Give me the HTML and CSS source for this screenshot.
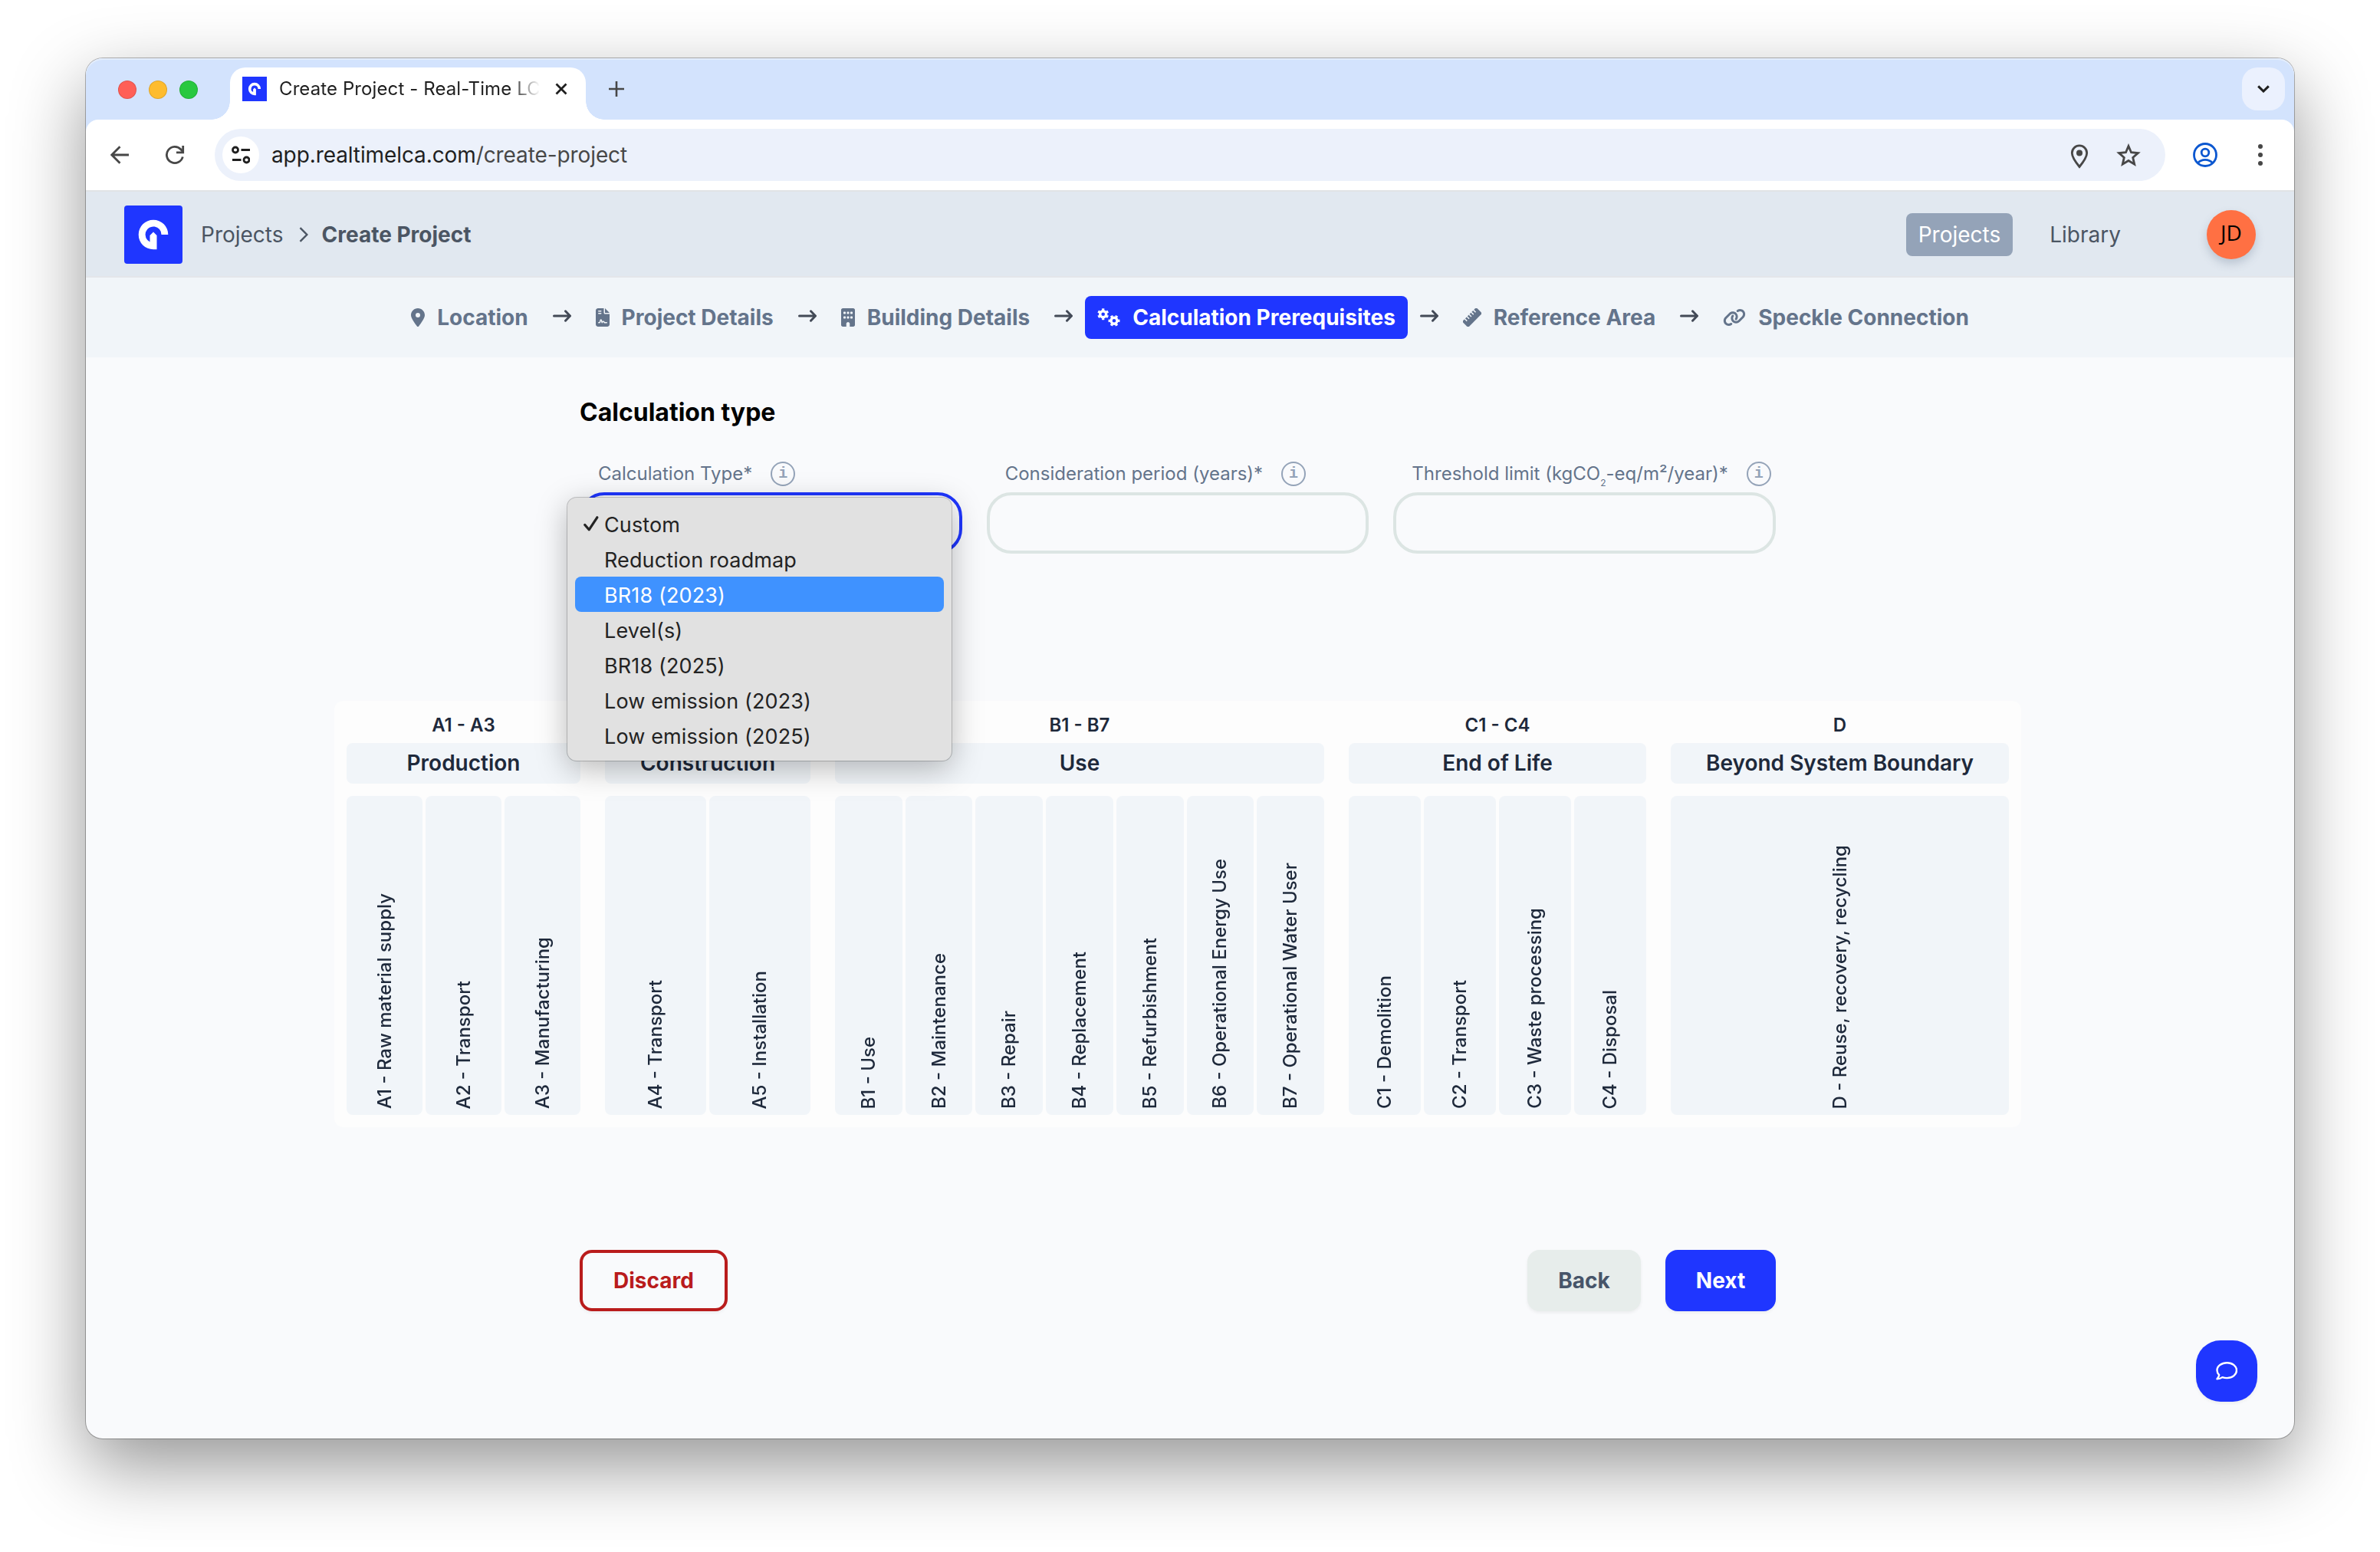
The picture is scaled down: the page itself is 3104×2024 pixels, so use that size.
FILE: index.html
```html
<!DOCTYPE html>
<html lang="en">
<head>
<meta charset="utf-8">
<title>Create Project - Real-Time LCA</title>
<link rel="stylesheet" href="styles.css">
</head>
<body>
<div class="window">
  <div class="tabstrip">
    <div class="lights"><span class="light red"></span><span class="light amber"></span><span class="light green"></span></div>
    <div class="tab">
      <svg class="favicon" viewBox="0 0 76 76"><rect width="76" height="76" fill="#1f36ff"/><path d="M57.3 38A19.3 19.3 0 1 0 38 57.3H42.5V39L38 34.500L33.500 39V47.400A10.500 10.500 0 1 1 48.500 38Z" fill="#fff"/></svg>
      <span class="tab-title">Create Project - Real-Time LC</span>
      <svg class="tab-close" viewBox="0 0 16 16"><path d="M1.500 1.500l13 13M14.500 1.500l-13 13" stroke="#1f1f1f" stroke-width="2.800" fill="none"/></svg>
    </div>
    <svg class="new-tab" viewBox="0 0 20 20"><path d="M10 0v20M0 10h20" stroke="#474747" stroke-width="2.600"/></svg>
    <div class="tab-search"><svg width="16" height="10" viewBox="0 0 16 10"><path d="M1.200 1.400L8 8l6.800-6.600" fill="none" stroke="#1f1f1f" stroke-width="3"/></svg></div>
  </div>
  <div class="toolbar">
    <svg class="nav-back" width="24" height="24" viewBox="0 0 24 24"><path d="M24 12H2.500M12.500 1.200L1.800 12l10.700 10.800" fill="none" stroke="#474747" stroke-width="2.800"/></svg>
    <svg class="nav-reload" width="26" height="26" viewBox="0 0 26 26"><path d="M23.300 15.500A10.600 10.600 0 1 1 20.800 5.800L23.500 8.700" fill="none" stroke="#474747" stroke-width="2.800"/><path d="M23.700 1v8.900H15" fill="none" stroke="#474747" stroke-width="2.800"/></svg>
    <div class="omnibox">
      <div class="site-info"><svg width="24" height="24" viewBox="0 0 24 24" fill="none" stroke="#1f1f1f" stroke-width="2.800"><circle cx="5" cy="5.500" r="3.500"/><path d="M12.500 5.500H24M1 18.500h11.500"/><circle cx="19.500" cy="18.500" r="3.500"/></svg></div>
      <span class="url">app.realtimelca.com<span class="url-path">/create-project</span></span>
      <svg class="pin" width="24" height="32" viewBox="0 0 24 32"><path d="M12 29.500C5.500 21.500 2.300 16 2.300 11.500a9.700 9.700 0 0 1 19.400 0C21.700 16 18.500 21.500 12 29.500z" fill="none" stroke="#474747" stroke-width="2.800"/><circle cx="12" cy="11.500" r="4" fill="#474747"/></svg>
      <svg width="32" height="30" viewBox="0 0 32 30"><path d="M16 3.500l3.500 8.200 8.900.8-6.700 5.900 2 8.700-7.700-4.600-7.700 4.600 2-8.700-6.700-5.900 8.900-.8z" fill="none" stroke="#474747" stroke-width="2.800"/></svg>
    </div>
    <svg class="profile" width="32" height="32" viewBox="0 0 32 32" fill="none" stroke="#0b57d0" stroke-width="2.800"><circle cx="16" cy="16" r="14.500"/><circle cx="16" cy="13" r="4.800"/><path d="M6.500 26.500C9 23.700 12.500 22.400 16 22.400s7 1.300 9.500 4.100"/></svg>
    <svg class="kebab" width="6" height="30" viewBox="0 0 6 30" fill="#474747"><circle cx="3" cy="4" r="3"/><circle cx="3" cy="15" r="3"/><circle cx="3" cy="26" r="3"/></svg>
  </div>

  <header class="header">
    <svg class="logo" viewBox="0 0 76 76"><rect width="76" height="76" rx="4" fill="#1f36ff"/><path d="M57.3 38A19.3 19.3 0 1 0 38 57.3H42.5V39L38 34.500L33.500 39V47.400A10.500 10.500 0 1 1 48.500 38Z" fill="#fff"/></svg>
    <span class="crumb">Projects</span>
    <svg class="crumb-sep" width="12" height="20" viewBox="0 0 12 20"><path d="M1.500 1.200L10.300 10l-8.800 8.800" fill="none" stroke="#4b5563" stroke-width="2.400"/></svg>
    <span class="crumb current">Create Project</span>
    <nav class="nav"><span class="nav-item active">Projects</span><span class="nav-item library">Library</span></nav>
    <div class="avatar">JD</div>
  </header>

  <div class="steps">
    <div class="step"><svg width="18" height="24" viewBox="0 0 384 512"><path d="M215.700 499.200C267 435 384 279.400 384 192C384 86 298 0 192 0S0 86 0 192c0 87.400 117 243 168.300 307.200c12.300 15.300 35.100 15.300 47.400 0zM192 128a64 64 0 1 1 0 128 64 64 0 1 1 0-128z"/></svg><span>Location</span></div>
    <svg class="arrow" viewBox="0 0 24 16"><path d="M1.500 8H22M16.500 1.800L22.500 8l-6 6.200"/></svg>
    <div class="step"><svg width="18" height="24" viewBox="0 0 384 512"><path d="M64 0C28.700 0 0 28.700 0 64V448c0 35.300 28.700 64 64 64H320c35.300 0 64-28.700 64-64V160H256c-17.700 0-32-14.300-32-32V0H64zM256 0V128H384L256 0zM80 64h64c8.800 0 16 7.200 16 16s-7.200 16-16 16H80c-8.800 0-16-7.200-16-16s7.200-16 16-16zm0 64h64c8.800 0 16 7.200 16 16s-7.200 16-16 16H80c-8.800 0-16-7.200-16-16s7.200-16 16-16zm54.200 253.800c-6.100 20.300-24.800 34.200-46 34.200H80c-8.800 0-16-7.200-16-16s7.200-16 16-16h8.200c7.100 0 13.300-4.600 15.300-11.400l14.900-49.500c3.400-11.300 13.800-19.100 25.600-19.100s22.200 7.700 25.600 19.100l11.600 38.600c7.400-6.200 16.800-9.700 26.800-9.700c15.900 0 30.400 9 37.500 23.200l4.400 8.800H304c8.800 0 16 7.200 16 16s-7.200 16-16 16H240c-6.100 0-11.600-3.400-14.300-8.800l-8.800-17.700c-1.700-3.400-5.100-5.500-8.800-5.500s-7.200 2.100-8.800 5.500l-8.800 17.700c-2.900 5.900-9.200 9.400-15.700 8.800s-12.100-5.100-13.900-11.300L144 349l-9.800 32.800z"/></svg><span>Project Details</span></div>
    <svg class="arrow" viewBox="0 0 24 16"><path d="M1.500 8H22M16.500 1.800L22.500 8l-6 6.200"/></svg>
    <div class="step"><svg width="18" height="24" viewBox="0 0 384 512"><path d="M48 0C21.500 0 0 21.500 0 48V464c0 26.500 21.500 48 48 48h96V432c0-26.500 21.500-48 48-48s48 21.500 48 48v80h96c26.500 0 48-21.500 48-48V48c0-26.500-21.500-48-48-48H48zM64 240c0-8.800 7.200-16 16-16h32c8.800 0 16 7.200 16 16v32c0 8.800-7.200 16-16 16H80c-8.800 0-16-7.200-16-16V240zm112-16h32c8.800 0 16 7.200 16 16v32c0 8.800-7.200 16-16 16H176c-8.800 0-16-7.200-16-16V240c0-8.800 7.200-16 16-16zm80 16c0-8.800 7.200-16 16-16h32c8.800 0 16 7.200 16 16v32c0 8.800-7.200 16-16 16H272c-8.800 0-16-7.200-16-16V240zM80 96h32c8.800 0 16 7.200 16 16v32c0 8.800-7.200 16-16 16H80c-8.800 0-16-7.200-16-16V112c0-8.800 7.200-16 16-16zm80 16c0-8.800 7.200-16 16-16h32c8.800 0 16 7.200 16 16v32c0 8.800-7.200 16-16 16H176c-8.800 0-16-7.200-16-16V112zM272 96h32c8.800 0 16 7.200 16 16v32c0 8.800-7.200 16-16 16H272c-8.800 0-16-7.200-16-16V112c0-8.800 7.200-16 16-16z"/></svg><span>Building Details</span></div>
    <svg class="arrow" viewBox="0 0 24 16"><path d="M1.500 8H22M16.500 1.800L22.500 8l-6 6.200"/></svg>
    <div class="step active"><svg width="30" height="24" viewBox="0 0 30 24" fill="none" stroke="#fff"><circle cx="7.700" cy="7.700" r="4" stroke-width="3.400"/><circle cx="7.700" cy="7.700" r="6.200" stroke-width="2.600" pathLength="60" stroke-dasharray="5 5" stroke-dashoffset="-2.500"/><circle cx="22" cy="16.300" r="4" stroke-width="3.400"/><circle cx="22" cy="16.300" r="6.200" stroke-width="2.600" pathLength="60" stroke-dasharray="5 5" stroke-dashoffset="2.500"/></svg><span>Calculation Prerequisites</span></div>
    <svg class="arrow" viewBox="0 0 24 16"><path d="M1.500 8H22M16.500 1.800L22.500 8l-6 6.200"/></svg>
    <div class="step"><svg width="24" height="24" viewBox="0 0 24 24"><g transform="rotate(-45 12 12)"><rect x="-1" y="6.500" width="26" height="11" rx="2"/><path d="M4 6v4.500M8 6v4.500M12 6v4.500M16 6v4.500M20 6v4.500" stroke="#f1f5f9" stroke-width="1.500"/></g></svg><span>Reference Area</span></div>
    <svg class="arrow" viewBox="0 0 24 16"><path d="M1.500 8H22M16.500 1.800L22.500 8l-6 6.200"/></svg>
    <div class="step"><svg width="30" height="24" viewBox="0 0 640 512"><path d="M579.800 267.700c56.500-56.500 56.500-148 0-204.500c-50-50-128.800-56.500-186.300-15.400l-1.600 1.100c-14.400 10.300-17.700 30.300-7.400 44.600s30.300 17.700 44.600 7.400l1.600-1.100c32.100-22.900 76-19.300 103.800 8.600c31.500 31.500 31.500 82.500 0 114L422.300 334.800c-31.500 31.500-82.500 31.500-114 0c-27.900-27.900-31.500-71.800-8.600-103.800l1.100-1.600c10.300-14.400 6.900-34.400-7.400-44.600s-34.400-6.900-44.600 7.400l-1.100 1.600C206.500 251.200 213 330 263 380c56.500 56.500 148 56.500 204.500 0L579.800 267.700zM60.200 244.300c-56.500 56.500-56.500 148 0 204.500c50 50 128.800 56.500 186.300 15.400l1.600-1.100c14.400-10.300 17.700-30.300 7.400-44.600s-30.300-17.700-44.600-7.400l-1.600 1.100c-32.100 22.900-76 19.300-103.800-8.600C74 372 74 321 105.500 289.500L217.700 177.200c31.500-31.500 82.500-31.500 114 0c27.900 27.900 31.500 71.800 8.600 103.900l-1.100 1.600c-10.300 14.400-6.900 34.400 7.400 44.600s34.400 6.900 44.600-7.400l1.100-1.600C433.500 260.800 427 182 377 132c-56.500-56.500-148-56.500-204.500 0L60.200 244.300z"/></svg><span>Speckle Connection</span></div>
  </div>

  <main class="main">
    <div class="form">
      <h2 class="title">Calculation type</h2>
      <div class="fields">
        <div class="field">
          <div class="label"><span>Calculation Type*</span><span class="info">i</span></div>
          <div class="input focused"></div>
          <div class="menu">
            <div class="option checked">Custom<svg class="check" width="20" height="20" viewBox="0 0 20 20"><path d="M1.800 11.500l5.400 6.300L17.800 1.800" fill="none" stroke="#232323" stroke-width="3.200" stroke-linecap="round" stroke-linejoin="round"/></svg></div>
            <div class="option">Reduction roadmap</div>
            <div class="option selected">BR18 (2023)</div>
            <div class="option">Level(s)</div>
            <div class="option">BR18 (2025)</div>
            <div class="option">Low emission (2023)</div>
            <div class="option">Low emission (2025)</div>
          </div>
        </div>
        <div class="field">
          <div class="label"><span>Consideration period (years)*</span><span class="info">i</span></div>
          <div class="input"></div>
        </div>
        <div class="field">
          <div class="label"><span>Threshold limit (kgCO<sub>2</sub>-eq/m²/year)*</span><span class="info">i</span></div>
          <div class="input"></div>
        </div>
      </div>
    </div>

    <div class="stages">
      <section class="group g-a"><div class="range">A1 - A3</div><div class="phase">Production</div>
        <div class="cells"><div class="cell"><span>A1 - Raw material supply</span></div><div class="cell"><span>A2 - Transport</span></div><div class="cell"><span>A3 - Manufacturing</span></div></div></section>
      <section class="group g-con"><div class="range"></div><div class="phase">Construction</div>
        <div class="cells"><div class="cell"><span>A4 - Transport</span></div><div class="cell"><span>A5 - Installation</span></div></div></section>
      <section class="group g-b"><div class="range">B1 - B7</div><div class="phase">Use</div>
        <div class="cells"><div class="cell"><span>B1 - Use</span></div><div class="cell"><span>B2 - Maintenance</span></div><div class="cell"><span>B3 - Repair</span></div><div class="cell"><span>B4 - Replacement</span></div><div class="cell"><span>B5 - Refurbishment</span></div><div class="cell"><span>B6 - Operational Energy Use</span></div><div class="cell"><span>B7 - Operational Water User</span></div></div></section>
      <section class="group g-c"><div class="range">C1 - C4</div><div class="phase">End of Life</div>
        <div class="cells"><div class="cell"><span>C1 - Demolition</span></div><div class="cell"><span>C2 - Transport</span></div><div class="cell"><span>C3 - Waste processing</span></div><div class="cell"><span>C4 - Disposal</span></div></div></section>
      <section class="group g-d"><div class="range">D</div><div class="phase">Beyond System Boundary</div>
        <div class="cells"><div class="cell"><span>D - Reuse, recovery, recycling</span></div></div></section>
    </div>

    <div class="actions">
      <button class="btn discard">Discard</button>
      <button class="btn back">Back</button>
      <button class="btn next">Next</button>
    </div>
  </main>
  <div class="chat"><svg width="28" height="24" viewBox="0 0 28 24"><path d="M14.500 1.200C7.300 1.200 1.500 5.500 1.500 11c0 2.300 1 4.400 2.700 6.100-.3 2-1.300 3.700-2.700 5.200 2.700 0 5-.8 6.900-2.200 1.900.7 3.900 1 6.100 1 7.200 0 12.500-4.500 12.500-10S21.700 1.200 14.500 1.200z" fill="none" stroke="#fff" stroke-width="2.400" stroke-linejoin="round"/></svg></div>
</div>
</body>
</html>
```
FILE: styles.css
```css
* { box-sizing: border-box; }
body { margin: 0; width: 3104px; height: 2024px; overflow: hidden; background: #fff; padding: 76px 112px; font-family: Inter, "Liberation Sans", sans-serif; font-size: 28px; color: #4b5563; }
svg { display: block; flex: none; }
.window { position: relative; width: 2880px; height: 1800px; border-radius: 22px; background: #f9fafc; display: flex; flex-direction: column; box-shadow: 0 0 0 1px rgba(0,0,0,.28), 0 36px 96px rgba(0,0,0,.42); }

.tabstrip { height: 96px; margin-bottom: -16px; background: #d3e3fd; border-radius: 22px 22px 0 0; display: flex; align-items: flex-start; box-shadow: inset 0 2px 0 #e3edfd; }
.lights { display: flex; gap: 16px; padding: 29px 0 0 42px; width: 188px; }
.light { width: 24px; height: 24px; border-radius: 50%; border: 1px solid rgba(0,0,0,.12); }
.red { background: #ff5f57; }
.amber { background: #febc2e; }
.green { background: #28c840; }
.tab { position: relative; width: 464px; margin-top: 12px; height: 68px; background: #fff; border-radius: 20px 20px 0 0; display: flex; align-items: flex-start; padding: 12px 16px 0; }
.tab::before, .tab::after { content: ""; position: absolute; bottom: 0; width: 24px; height: 24px; }
.tab::before { left: -24px; background: radial-gradient(circle at 0 0, transparent 23.5px, #fff 24px); }
.tab::after { right: -24px; background: radial-gradient(circle at 100% 0, transparent 23.5px, #fff 24px); }
.favicon { width: 32px; height: 32px; }
.tab-title { margin-left: 16px; width: 340px; line-height: 31px; font-size: 24px; letter-spacing: .1px; color: #1f1f1f; white-space: nowrap; -webkit-mask-image: linear-gradient(90deg, #000 302px, transparent 340px); mask-image: linear-gradient(90deg, #000 302px, transparent 340px); }
.tab-close { width: 16px; height: 16px; margin: 8px 0 0 20px; }
.new-tab { width: 20px; height: 20px; margin: 30px 0 0 30px; }
.tab-search { margin: 12px 12px 0 auto; width: 56px; height: 56px; border-radius: 20px; background: #ebf1fe; display: flex; align-items: center; justify-content: center; }

.toolbar { position: relative; height: 94px; padding: 12px 41px 12px 32px; background: #fff; border-bottom: 2px solid #e0e3e5; border-radius: 16px 16px 0 0; display: flex; align-items: center; }
.nav-reload { margin-left: 47px; }
.omnibox { margin-left: 39px; width: 2544px; height: 68px; border-radius: 34px; background: #ecf1fb; display: flex; align-items: center; padding: 0 32px 0 10px; }
.site-info { width: 48px; height: 48px; border-radius: 50%; background: #fff; display: flex; align-items: center; justify-content: center; }
.url { margin-left: 16px; color: #1f1f1f; letter-spacing: -.1px; }
.url-path { color: #474747; }
.pin { margin: 4px 36px 0 auto; }
.profile { margin-left: 36px; }
.kebab { margin-left: 53px; }

.header { height: 112px; background: #e1e8f0; border-bottom: 2px solid #e4e6ea; display: flex; align-items: center; padding: 2px 50px 0; }
.logo { width: 76px; height: 76px; }
.crumb { margin-left: 24px; }
.crumb-sep { margin-left: 20px; }
.current { margin-left: 18px; font-weight: 700; }
.nav { margin-left: auto; display: flex; gap: 32px; }
.nav-item { height: 56px; line-height: 56px; padding: 0 16px; border-radius: 8px; }
.nav-item.active { background: #94a3b8; color: #fff; }
.avatar { margin-left: 96px; width: 64px; height: 64px; border-radius: 50%; background: #ff7043; color: #000; font-family: "Open Sans", "Noto Sans", sans-serif; text-align: center; line-height: 59px; box-shadow: 0 6px 12px rgba(100,116,139,.3); }

.steps { height: 104px; background: #f1f5f9; display: flex; align-items: center; justify-content: center; gap: 16px; }
.step { height: 56px; padding: 0 16px; border-radius: 8px; display: flex; align-items: center; gap: 16px; color: #64748b; fill: #64748b; font-weight: 700; white-space: nowrap; }
.step.active { background: #1f36ff; color: #fff; }
.arrow { width: 24px; height: 16px; margin-top: -4px; fill: none; stroke: #434a57; stroke-width: 3; stroke-linecap: round; stroke-linejoin: round; }

.main { flex: 1; display: flex; flex-direction: column; align-items: center; padding: 50px 32px 0 0; }
.form { width: 1560px; }
.title { margin: 0; font-size: 32px; line-height: 44px; font-weight: 700; color: #000; }
.fields { margin-top: 42px; display: grid; grid-template-columns: repeat(3, 1fr); gap: 32px; }
.field { position: relative; }
.label { height: 32px; padding-left: 24px; display: flex; align-items: center; gap: 24px; font-size: 24px; line-height: 28px; color: #64748b; white-space: nowrap; }
.label sub { font-size: 12px; vertical-align: -8px; line-height: 0; }
.info { width: 32px; height: 32px; border: 2px solid #94a3b8; border-radius: 50%; text-align: center; font: bold 20px/28px "Liberation Mono", monospace; color: #94a3b8; }
.input { margin-top: 8px; height: 80px; border: 4px solid #dce5e3; border-radius: 32px; }
.input.focused { border-color: #1f36ff; }
.menu { position: absolute; z-index: 5; left: -16px; top: 47px; width: 501px; height: 343px; padding: 11px 10px; border-radius: 12px; background: #e1e1e1; box-shadow: 0 0 0 1px rgba(0,0,0,.2), 0 10px 40px rgba(0,0,0,.28); color: #232323; }
.option { position: relative; height: 46px; line-height: 49px; padding-left: 38px; border-radius: 8px; font-size: 27px; letter-spacing: .12px; }
.option.selected { background: #3f92ff; color: #fff; }
.check { position: absolute; left: 11px; top: 13px; }

.stages { margin-top: 192px; width: 2200px; height: 556px; padding: 16px; border-radius: 12px; background: #fdfdfd; display: flex; gap: 32px; color: #1e293b; }
.group { display: flex; flex-direction: column; }
.g-a { width: 305px; }
.g-con { width: 268px; }
.g-b { width: 638px; }
.g-c { width: 388px; }
.g-d { width: 441px; }
.range { height: 39px; line-height: 32px; text-align: center; font-size: 24px; font-weight: 600; }
.phase { height: 53px; line-height: 53px; border-radius: 8px; background: #f1f5f9; text-align: center; font-weight: 600; }
.cells { margin-top: 16px; flex: 1; display: flex; gap: 4px; }
.cell { flex: 1 1 0; border-radius: 8px; background: #f1f5f9; display: flex; flex-direction: column; align-items: center; justify-content: flex-end; padding: 0 1px 8px 0; font-size: 24px; font-weight: 500; }
.cell span { writing-mode: vertical-rl; transform: rotate(180deg); white-space: nowrap; }

.actions { margin-top: 160px; width: 1560px; display: flex; gap: 32px; }
.btn { height: 80px; border: 0; border-radius: 16px; font: 700 28px Inter, sans-serif; padding: 0; box-shadow: 0 2px 4px rgba(0,0,0,.06); }
.discard { width: 193px; margin-right: auto; border: 4px solid #b91c1c; color: #b91c1c; background: transparent; }
.back { width: 148px; background: #e7edeb; color: #475569; }
.next { width: 144px; background: #1f36ff; color: #fff; }
.chat { position: absolute; right: 48px; bottom: 48px; width: 80px; height: 80px; border-radius: 32px; background: #1f36ff; display: flex; align-items: center; justify-content: center; box-shadow: 0 2px 4px rgba(0,0,0,.06); }
```
